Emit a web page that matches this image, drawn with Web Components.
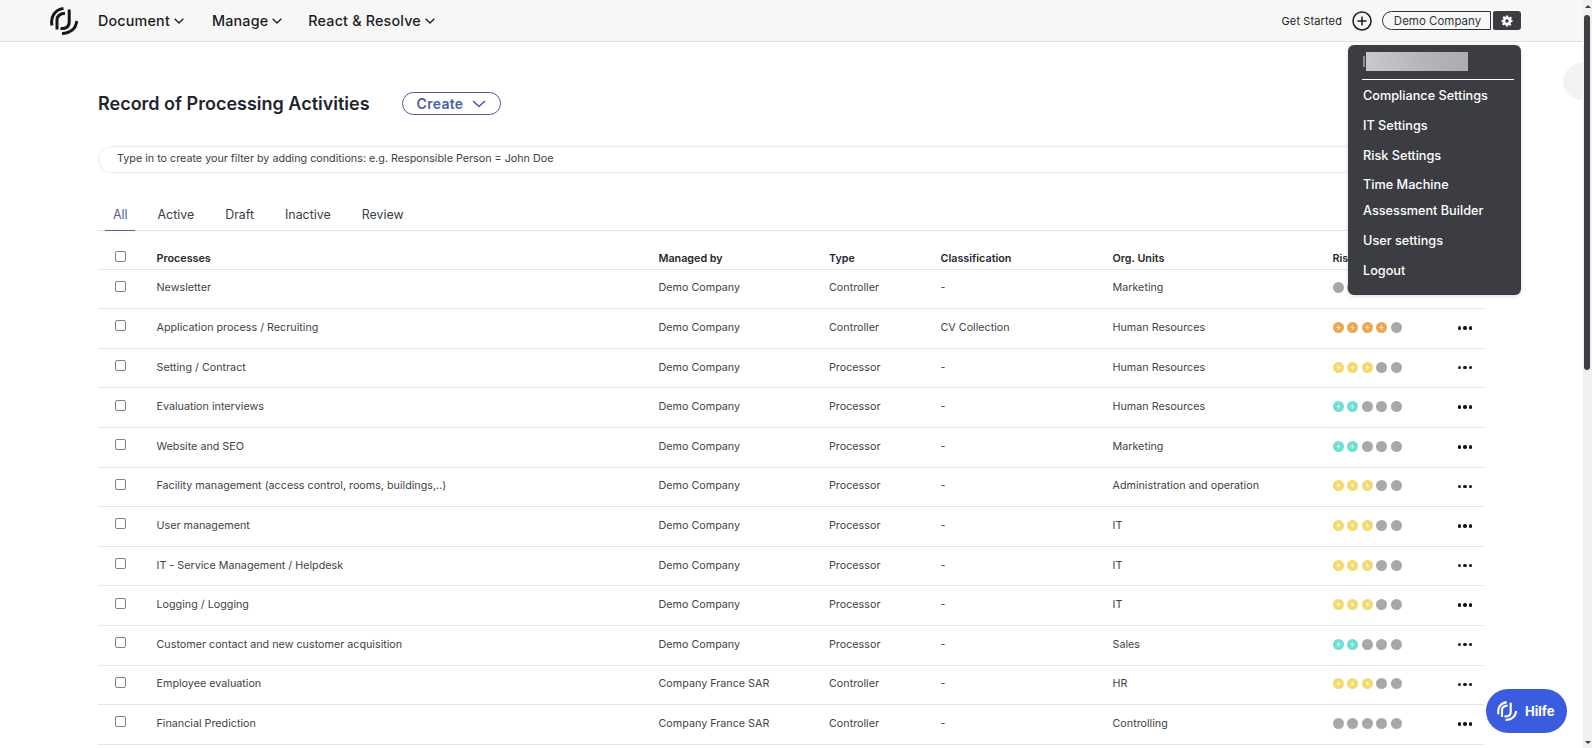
<!DOCTYPE html>
<html>
<head>
<meta charset="utf-8">
<style>
html,body{margin:0;height:100%;overflow:hidden;background:#fff}
body{font-family:Inter,"Liberation Sans",sans-serif}
</style>
</head>
<body>
<app-shell>
  <top-bar></top-bar>
  <ropa-page></ropa-page>
</app-shell>

<script>
// the logo is used twice, header and help button
function logo(size, color) {
  return '<svg width="' + size + '" height="' + size + '" viewBox="0 0 28 28" fill="none" stroke="' + color + '" stroke-width="3">' +
    '<path d="M2 18.500C.2 10 5 2.500 13.500 1.500"/>' +
    '<path d="M7 22.500V13C7 9 10 6.800 15 6.300"/>' +
    '<path d="M19.200 2.500V15C19.200 20 16 22 10.500 21.500"/>' +
    '<path d="M26.800 14C26 21.500 20.500 26 12 26.600"/>' +
    '</svg>';
}

var chevron = '<svg width="10" height="6" viewBox="0 0 10 6" fill="none" stroke="currentColor" stroke-width="1.300"><path d="M.7.7L5 5l4.300-4.300"/></svg>';

class AppShell extends HTMLElement {
  connectedCallback() {
    this.attachShadow({mode: 'open'}).innerHTML = `
      <style>
        :host{display:grid;grid-template-columns:1fr 9px;height:748px;position:relative;overflow:hidden}
        main{min-width:0;height:748px;overflow:hidden;display:flex;flex-direction:column;position:relative}
        .bar{background:#f1f1f1;display:flex;flex-direction:column;align-items:flex-start;height:748px}
        .arr{height:12px;width:9px;display:flex;align-items:center;justify-content:center;flex:none}
        .arr i{border:3px solid transparent}
        .up i{border-bottom:3px solid #404040;border-top:0}
        .down i{border-top:3px solid #404040;border-bottom:0}
        .thumb{width:6px;height:355px;background:#3f4045;border-radius:3px;flex:none;margin:3px 0 0 1px}
        .sp{flex:1}
        .hilfe{position:absolute;left:1486px;top:689px;width:81px;height:44px;border-radius:22px;background:#3c5ce0;color:#fff;display:flex;align-items:center;gap:8px;padding-left:11px;box-sizing:border-box;font-size:13px;font-weight:700}
        .bump{position:absolute;left:1563px;top:63px;width:20px;height:37px;border-radius:20px 0 0 20px / 18.500px 0 0 18.500px;background:#f2f2f2}
      </style>
      <main><slot></slot></main>
      <div class="bar">
        <div class="arr up"><i></i></div>
        <div class="thumb"></div>
        <div class="sp"></div>
        <div class="arr down"><i></i></div>
      </div>
      <div class="bump"></div>
      <div class="hilfe">${logo(20, '#fff')}<span>Hilfe</span></div>`;
  }
}
customElements.define('app-shell', AppShell);

class TopBar extends HTMLElement {
  connectedCallback() {
    var items = ['Document', 'Manage', 'React &amp; Resolve'];
    this.attachShadow({mode: 'open'}).innerHTML = `
      <style>
        :host{display:flex;align-items:center;height:42px;box-sizing:border-box;background:#f7f7f7;border-bottom:1px solid #dedede;padding:0 62px 0 50px;flex:none;color:#1c1c22}
        .logo{display:flex;margin-right:20px}
        nav{display:flex;gap:26px;font-size:14.300px;font-weight:500;letter-spacing:.2px}
        nav span{display:flex;align-items:center;gap:4px}
        nav span:first-child{margin-right:2px}
        .right{margin-left:auto;display:flex;align-items:center}
        .gs{font-size:11px;font-weight:400;margin-right:10px;color:#222;letter-spacing:.12px}
        .plus{display:flex;margin-right:10px}
        .co{height:19px;width:109px;box-sizing:border-box;border:1px solid #33343a;border-radius:10px 0 0 10px;font-size:11.500px;display:flex;align-items:center;justify-content:center;color:#33343a;margin-right:2px;padding-left:2px}
        .gear{width:28px;height:19px;background:#3c3d42;border-radius:2px 3px 3px 2px;display:flex;align-items:center;justify-content:center}
      </style>
      <div class="logo">${logo(28, '#18181c')}</div>
      <nav>${items.map(function (t) { return '<span>' + t + chevron + '</span>'; }).join('')}</nav>
      <div class="right">
        <span class="gs">Get Started</span>
        <span class="plus"><svg width="20" height="20" viewBox="0 0 20 20" fill="none" stroke="#1c1c22" stroke-width="1.500"><circle cx="10" cy="10" r="9"/><path d="M10 5.500v9M5.500 10h9"/></svg></span>
        <span class="co">Demo Company</span>
        <span class="gear"><svg width="12" height="12" viewBox="0 0 24 24" fill="#fff"><path fill-rule="evenodd" d="M10 1h4l.6 3.200 1.900.8 2.700-1.800 2.800 2.800-1.800 2.700.8 1.900L23 10v4l-3.200.6-.8 1.900 1.800 2.700-2.800 2.800-2.700-1.800-1.900.8L14 23h-4l-.6-3.200-1.900-.8-2.700 1.800-2.800-2.800 1.800-2.700-.8-1.900L1 14v-4l3.200-.6.8-1.900-1.800-2.700L6 2l2.700 1.800 1.900-.8zM12 8.500a3.500 3.500 0 1 0 0 7 3.500 3.500 0 0 0 0-7z"/></svg></span>
      </div>
      <settings-menu></settings-menu>`;
  }
}
customElements.define('top-bar', TopBar);

class SettingsMenu extends HTMLElement {
  connectedCallback() {
    this.attachShadow({mode: 'open'}).innerHTML = `
      <style>
        :host{position:absolute;left:1348px;top:45px;width:173px;height:250px;box-sizing:border-box;background:#3c3d42;border-radius:6px;color:#fff;font-size:12.700px;font-weight:500;padding:7px 7px 0 14px;z-index:5;display:block;box-shadow:0 1px 4px rgba(0,0,0,.15)}
        .name{height:19px;width:102px;margin-left:4px;background:linear-gradient(90deg,#c9c9cb,#b4b4b7 60%,#adadb0);position:relative}
        .name:before{content:"";position:absolute;left:-3px;top:4px;width:2px;height:11px;background:#8e8e92}
        hr{border:0;border-top:1px solid #fff;margin:8px 0 0}
        div.i{line-height:18px}
        .list{display:flex;flex-direction:column;margin-top:7px;padding-left:1px}
        .a{margin-bottom:12px}
        .t{margin-bottom:8px}
      </style>
      <div class="name"></div>
      <hr>
      <div class="list">
        <div class="i a">Compliance Settings</div>
        <div class="i a">IT Settings</div>
        <div class="i a" style="margin-bottom:11px">Risk Settings</div>
        <div class="i t">Time Machine</div>
        <div class="i a">Assessment Builder</div>
        <div class="i a">User settings</div>
        <div class="i">Logout</div>
      </div>`;
  }
}
customElements.define('settings-menu', SettingsMenu);

class RopaPage extends HTMLElement {
  connectedCallback() {
    var tabs = ['All', 'Active', 'Draft', 'Inactive', 'Review'];
    this.attachShadow({mode: 'open'}).innerHTML = `
      <style>
        :host{display:block;padding:0 99px 0 98px;color:#25282e}
        .head{display:flex;align-items:center;height:23px;margin-top:50px}
        h1{margin:0;font-size:18px;font-weight:600;color:#1f2530;width:304px}
        .create{box-sizing:border-box;width:99px;height:23px;border:1px solid #4b5a9b;border-radius:12px;color:#4b5fa8;font-size:14px;font-weight:600;display:flex;align-items:center;justify-content:center;gap:9px;letter-spacing:.3px}
        .filter{box-sizing:border-box;height:27px;margin-top:31px;border:1px solid #ececec;border-radius:14px;padding:0 0 3px 18px;display:flex;align-items:center;font-size:10.750px;color:#3a3d44}
        .tabs{display:flex;height:58px;box-sizing:border-box;border-bottom:1px solid #e3e3e3;align-items:flex-end;font-size:12.400px;color:#3a3d44;padding-left:7px}
        .tabs span{padding:0 8px 8px;margin-right:15px;margin-bottom:-1px;border-bottom:1px solid transparent}
        .tabs span:first-child{color:#5360a8;border-bottom-color:#5360a8;padding-right:7px}
      </style>
      <div class="head">
        <h1>Record of Processing Activities</h1>
        <div class="create">Create <svg width="14" height="8" viewBox="0 0 14 8" fill="none" stroke="#4b5fa8" stroke-width="1.600"><path d="M1 1l6 5.500L13 1"/></svg></div>
      </div>
      <div class="filter">Type in to create your filter by adding conditions: e.g. Responsible Person = John Doe</div>
      <div class="tabs">${tabs.map(function (t) { return '<span>' + t + '</span>'; }).join('')}</div>
      <ropa-table></ropa-table>`;
  }
}
customElements.define('ropa-page', RopaPage);

class RiskDots extends HTMLElement {
  connectedCallback() {
    var n = +this.getAttribute('level');
    var c = this.getAttribute('color');
    var html = '';
    for (var i = 0; i < 5; i++) {
      if (i < n) {
        html += '<b style="background:' + c + '"><svg width="7" height="7" viewBox="0 0 8 8" fill="#fff" fill-opacity=".75"><path d="M4.800.5L1.500 4.500H3.600L3 7.500 6.500 3.300H4.300z"/></svg></b>';
      } else {
        html += '<b></b>';
      }
    }
    this.attachShadow({mode: 'open'}).innerHTML = `
      <style>
        :host{display:flex;gap:3.600px}
        b{width:11px;height:11px;border-radius:50%;background:#a8a8a8;display:flex;align-items:center;justify-content:center}
      </style>${html}`;
  }
}
customElements.define('risk-dots', RiskDots);

class RopaTable extends HTMLElement {
  connectedCallback() {
    var O = '#f0a552', Y = '#f3da6e', T = '#6de0d0';
    var d = 'Demo Company', f = 'Company France SAR', c = 'Controller', p = 'Processor';
    var rows = [
      ['Newsletter', d, c, '-', 'Marketing', 0, ''],
      ['Application process / Recruiting', d, c, 'CV Collection', 'Human Resources', 4, O],
      ['Setting / Contract', d, p, '-', 'Human Resources', 3, Y],
      ['Evaluation interviews', d, p, '-', 'Human Resources', 2, T],
      ['Website and SEO', d, p, '-', 'Marketing', 2, T],
      ['Facility management (access control, rooms, buildings,..)', d, p, '-', 'Administration and operation', 3, Y],
      ['User management', d, p, '-', 'IT', 3, Y],
      ['IT - Service Management / Helpdesk', d, p, '-', 'IT', 3, Y],
      ['Logging / Logging', d, p, '-', 'IT', 3, Y],
      ['Customer contact and new customer acquisition', d, p, '-', 'Sales', 2, T],
      ['Employee evaluation', f, c, '-', 'HR', 3, Y],
      ['Financial Prediction', f, c, '-', 'Controlling', 0, '']
    ];
    var body = rows.map(function (r) {
      return '<div class="row"><span class="cb"></span><span>' + r[0] + '</span><span>' + r[1] + '</span><span>' + r[2] + '</span><span>' + r[3] + '</span><span>' + r[4] + '</span>' +
        '<risk-dots level="' + r[5] + '" color="' + r[6] + '"></risk-dots><span class="more"><i></i><i></i><i></i></span></div>';
    }).join('');
    this.attachShadow({mode: 'open'}).innerHTML = `
      <style>
        :host{display:block;font-size:10.750px;color:#3f4249}
        .row{display:grid;grid-template-columns:58.500px 502px 170.500px 111.500px 172px 220px 124px 1fr;align-items:center;height:39.600px;box-sizing:border-box;border-bottom:1px solid #e6e6e6;padding-bottom:2px}
        .hd{height:38.600px;font-weight:600;color:#25282e;padding-top:17px;padding-bottom:0}
        .cb{box-sizing:border-box;width:11px;height:11px;margin:0 0 3px 17px;border:1px solid #808080;border-radius:2px;background:#fff}
        .hd .cb{margin-bottom:4px}
        .more{display:flex;gap:2px;padding-left:1px;margin-top:1px}
        .more i{width:3.500px;height:3.500px;border-radius:50%;background:#111}
      </style>
      <div class="row hd"><span class="cb"></span><span>Processes</span><span>Managed by</span><span>Type</span><span>Classification</span><span>Org. Units</span><span>Risk</span><span></span></div>
      ${body}`;
  }
}
customElements.define('ropa-table', RopaTable);
</script>
</body>
</html>
